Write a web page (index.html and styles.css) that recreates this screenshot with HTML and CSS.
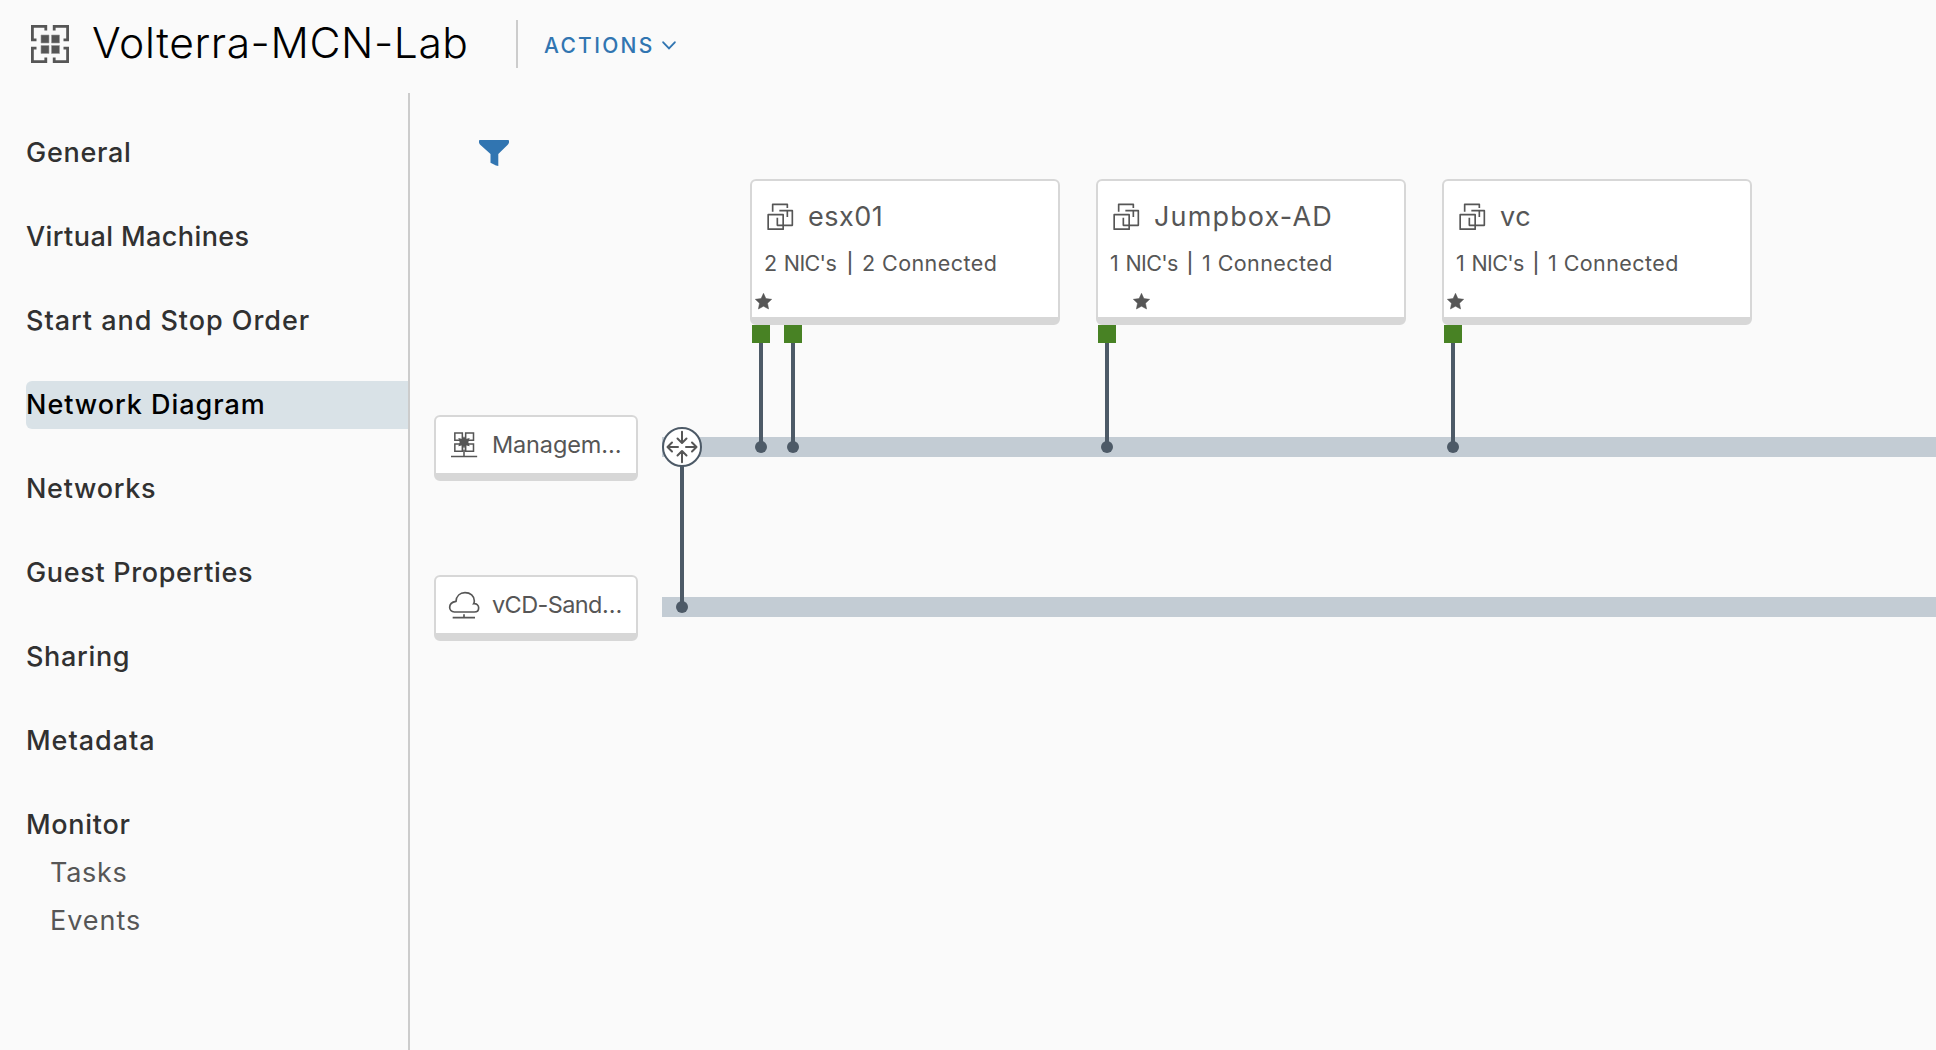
FILE: index.html
```html
<!DOCTYPE html>
<html lang="en">
<head>
<meta charset="utf-8">
<title>Volterra-MCN-Lab</title>
<link rel="stylesheet" href="styles.css">
</head>
<body>
<svg class="defs" aria-hidden="true">
  <symbol id="icon-vm" viewBox="21 21 84 84">
    <g fill="none" stroke="currentColor" stroke-width="5" stroke-linejoin="round">
      <path d="M38 50V28H82V39"/>
      <path d="M58 47H97V91H52V68"/>
      <path d="M82 47V66"/>
      <rect x="24.5" y="59" width="45" height="43.500"/>
    </g>
  </symbol>
  <symbol id="icon-star" viewBox="0 0 17 17">
    <path d="M8.5 .3 10.900 5.600 16.700 6.300 12.500 10.200 13.600 16 8.500 13.200 3.400 16 4.500 10.200 .3 6.300 6.100 5.600Z" fill="currentColor" stroke="currentColor" stroke-width=".5" stroke-linejoin="round"/>
  </symbol>
</svg>

<header class="header">
  <svg class="header-icon" viewBox="0 0 38 38">
    <path d="M14.800 5.500V1.400H1.400V14.800H5.500M23.200 5.500V1.400H36.600V14.800H32.500M14.800 32.500V36.600H1.400V23.200H5.500M23.200 32.500V36.600H36.600V23.200H32.500" fill="none" stroke="#565656" stroke-width="2.800"/>
    <path d="M10 10h8v8h-8zM20.500 10h8v8h-8zM10 20.500h8v8h-8zM20.500 20.500h8v8h-8z" fill="#565656" stroke="#9a9a9a" stroke-width=".6"/>
  </svg>
  <h1 class="title">Volterra-MCN-Lab</h1>
  <button class="actions" type="button">
    <span>ACTIONS</span>
    <svg class="caret" viewBox="0 0 14 9"><path d="M1.200 1.300 7 7.300 12.800 1.300" fill="none" stroke="currentColor" stroke-width="1.900" stroke-linecap="round"/></svg>
  </button>
</header>

<div class="body">
  <nav class="sidebar">
    <a class="nav-item">General</a>
    <a class="nav-item nav-tight">Virtual Machines</a>
    <a class="nav-item nav-wide">Start and Stop Order</a>
    <a class="nav-item nav-wide active">Network Diagram</a>
    <a class="nav-item">Networks</a>
    <a class="nav-item nav-snug">Guest Properties</a>
    <a class="nav-item nav-snug">Sharing</a>
    <a class="nav-item nav-wide">Metadata</a>
    <a class="nav-item">Monitor</a>
    <a class="nav-sub">Tasks</a>
    <a class="nav-sub nav-wide">Events</a>
  </nav>

  <main class="diagram">
    <svg class="wires" viewBox="410 93 1526 957">
      <path d="M662 437H1936V457H662ZM662 597H1936V617H662Z" fill="#c3ccd4"/>
      <path d="M761 343V447M793 343V447M1107 343V447M1453 343V447M682 447V607" stroke="#4d5a67" stroke-width="4"/>
      <g fill="#4d5a67">
        <circle cx="761" cy="447" r="6"/><circle cx="793" cy="447" r="6"/>
        <circle cx="1107" cy="447" r="6"/><circle cx="1453" cy="447" r="6"/>
        <circle cx="682" cy="607" r="6"/>
      </g>
      <path d="M752 325h18v18h-18zM784 325h18v18h-18zM1098 325h18v18h-18zM1444 325h18v18h-18z" fill="#488224"/>
      <circle cx="682" cy="447" r="19" fill="#fff" stroke="#4d5a67" stroke-width="2"/>
      <path d="M682 431.800V442.500M677.500 438.500 682 443 686.500 438.500M682 462.200V451.500M677.500 455.500 682 451 686.500 455.500M678 447H667.500M672 442.500 667.500 447 672 451.500M686 447H696.500M692 442.500 696.500 447 692 451.500" fill="none" stroke="#565656" stroke-width="2" stroke-linecap="round" stroke-linejoin="round"/>
    </svg>

    <div class="toolbar">
      <svg class="filter" viewBox="0 0 30 26"><path d="M.8 0H29.200Q30 0 30 1V2.500Q29.500 4 28.500 5L19.300 14V26L17 25.500 11.500 22.800V14L1.500 5Q.4 4 0 2.500V1Q0 0 .8 0Z" fill="#3175b1"/></svg>
    </div>

    <section class="vms">
      <article class="vm">
        <h2 class="vm-name snug"><svg class="vm-icon"><use href="#icon-vm"/></svg><span>esx01</span></h2>
        <p class="nics"><span class="nic-total two">2 NIC's</span><span class="bar">|</span><span class="linked">2 Connected</span></p>
        <svg class="star"><use href="#icon-star"/></svg>
      </article>
      <article class="vm">
        <h2 class="vm-name"><svg class="vm-icon"><use href="#icon-vm"/></svg><span>Jumpbox-AD</span></h2>
        <p class="nics"><span class="nic-total">1 NIC's</span><span class="bar">|</span><span class="linked">1 Connected</span></p>
        <svg class="star offset"><use href="#icon-star"/></svg>
      </article>
      <article class="vm">
        <h2 class="vm-name snug"><svg class="vm-icon"><use href="#icon-vm"/></svg><span>vc</span></h2>
        <p class="nics"><span class="nic-total">1 NIC's</span><span class="bar">|</span><span class="linked">1 Connected</span></p>
        <svg class="star"><use href="#icon-star"/></svg>
      </article>
    </section>

    <section class="networks">
      <article class="network">
        <svg class="network-icon" viewBox="24 33 96 84">
          <path d="M44.500 39H67V61H44.500ZM77 39H100.500V61H77ZM44.500 72H67V94H44.500ZM77 72H100.500V94H77ZM72 82V109M33 109.500H111.500" fill="none" stroke="#565656" stroke-width="4.600"/>
          <path d="M72 49 77 57 89 54 85 66.500 89 79 77 76 72 84 67 76 55 79 59 66.500 55 54 67 57Z" fill="#565656"/>
          <path d="M70 83h4v6h-4z" fill="#fff"/>
        </svg>
        <span class="network-name">Managem…</span>
      </article>
      <article class="network tight">
        <svg class="network-icon" viewBox="24 33 96 84">
          <path d="M43 96C34 96 29 89 29 82 29 73 35 66 48 64 49 48 60 38 75 38 91 38 103 48 103 63 103 67 102 69 101 71 109 70 116 75 116 83 116 91 111 96 103 96ZM72 103V113M38 113H105" fill="none" stroke="#565656" stroke-width="5"/>
        </svg>
        <span class="network-name">vCD-Sand…</span>
      </article>
    </section>
  </main>
</div>
</body>
</html>
```
FILE: styles.css
```css
* {
  box-sizing: border-box;
}

body {
  margin: 0;
  height: 1050px;
  overflow: hidden;
  display: flex;
  flex-direction: column;
  background: #fafafa;
  color: #565656;
  font-family: Inter, "Liberation Sans", sans-serif;
}

h1, h2, p {
  margin: 0;
  font-weight: 400;
}

.defs {
  display: none;
}

.header {
  flex: none;
  height: 93px;
  padding: 0 0 5px 31px;
  display: flex;
  align-items: center;
}

.header-icon {
  width: 38px;
  height: 38px;
}

.title {
  width: 447px;
  padding: 0 0 3px 23px;
  color: #000;
  font-size: 42.6px;
  font-weight: 350;
  letter-spacing: 0.58px;
  white-space: nowrap;
}

.actions {
  height: 48px;
  padding: 2px 0 0 26px;
  display: flex;
  align-items: center;
  gap: 7px;
  border: 0;
  border-left: 2px solid #ccc;
  background: none;
  color: #3175b1;
  font: 500 21px Inter, "Liberation Sans", sans-serif;
  letter-spacing: 2.3px;
}

.caret {
  width: 14px;
  height: 9px;
}

.body {
  flex: 1;
  display: flex;
}

.sidebar {
  flex: none;
  width: 410px;
  padding: 36px 0 0 26px;
  display: flex;
  flex-direction: column;
  border-right: 2px solid #ccc;
}

.nav-item,
.nav-sub {
  height: 48px;
  border-radius: 6px 0 0 6px;
  font-size: 27px;
  line-height: 47px;
  letter-spacing: 0.7px;
  white-space: nowrap;
}

.nav-item {
  color: #313131;
  font-weight: 500;
}

.nav-item + .nav-item {
  margin-top: 36px;
}

.nav-sub {
  padding-left: 24px;
}

.nav-tight {
  letter-spacing: 0.42px;
}

.nav-snug {
  letter-spacing: 0.66px;
}

.nav-wide {
  letter-spacing: 0.96px;
}

.active {
  background: #d9e2e7;
  color: #000;
}

.diagram {
  position: relative;
  flex: 1;
  padding-top: 47px;
}

.wires {
  position: absolute;
  top: 0;
  left: 0;
  width: 1526px;
  height: 957px;
}

.toolbar {
  height: 26px;
  padding-left: 69px;
}

.filter {
  display: block;
  width: 30px;
  height: 26px;
}

.vms {
  margin: 13px 0 0 340px;
  display: flex;
  gap: 36px;
}

.vm,
.network {
  border: 2px solid #d7d7d7;
  border-bottom-width: 8px;
  border-radius: 6px;
  background: #fff;
}

.vm {
  width: 310px;
  height: 146px;
  padding-top: 19px;
}

.vm-name {
  height: 32px;
  padding-left: 15px;
  display: flex;
  align-items: center;
  gap: 13px;
  font-size: 27px;
  line-height: 32px;
  letter-spacing: 1.15px;
}

.vm-name span {
  padding-top: 1px;
}

.snug {
  letter-spacing: 0.5px;
}

.vm-icon {
  width: 28px;
  height: 28px;
}

.nics {
  height: 26px;
  margin-top: 18px;
  padding-left: 12px;
  display: flex;
  font-size: 21.5px;
  line-height: 26px;
  white-space: nowrap;
}

.nic-total {
  width: 77px;
  letter-spacing: -0.65px;
  word-spacing: 2px;
}

.two {
  width: 83px;
}

.bar {
  width: 6px;
  margin-right: 9px;
  display: flex;
  justify-content: center;
  font-size: 20px;
  font-weight: 500;
}

.linked {
  letter-spacing: 0.43px;
}

.star {
  display: block;
  width: 17px;
  height: 17px;
  margin: 17px 0 0 3px;
}

.offset {
  margin-left: 35px;
}

.networks {
  width: 204px;
  margin: 90px 0 0 24px;
  display: flex;
  flex-direction: column;
  gap: 94px;
}

.network {
  height: 66px;
  padding-left: 12px;
  display: flex;
  align-items: center;
  gap: 12px;
  font-size: 23.5px;
  letter-spacing: -0.15px;
  white-space: nowrap;
}

.network-name {
  padding-bottom: 2px;
}

.tight {
  letter-spacing: -0.6px;
}

.network-icon {
  flex: none;
  width: 32px;
  height: 28px;
}
```
